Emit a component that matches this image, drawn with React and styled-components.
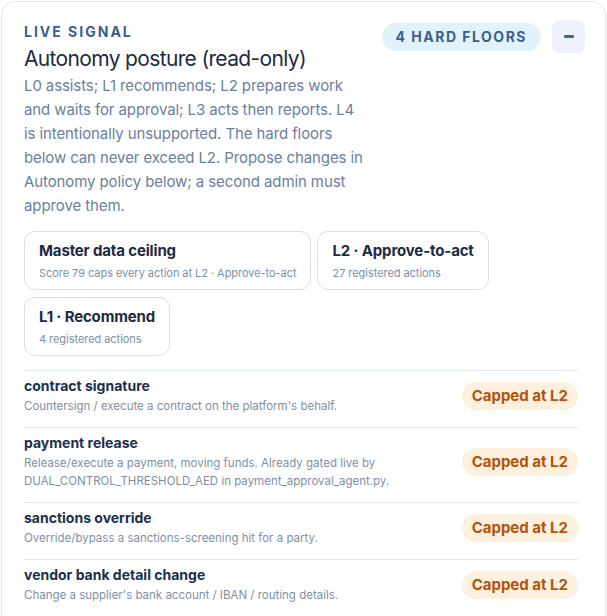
import React from "react";
import styled, { createGlobalStyle } from "styled-components";

const floors = [
  {
    id: "contract_signature",
    name: "contract signature",
    detail: "Countersign / execute a contract on the platform's behalf.",
  },
  {
    id: "payment_release",
    name: "payment release",
    detail:
      "Release/execute a payment, moving funds. Already gated live by DUAL_CONTROL_THRESHOLD_AED in payment_approval_agent.py.",
  },
  {
    id: "sanctions_override",
    name: "sanctions override",
    detail: "Override/bypass a sanctions-screening hit for a party.",
  },
  {
    id: "vendor_bank_detail_change",
    name: "vendor bank detail change",
    detail: "Change a supplier's bank account / IBAN / routing details.",
  },
];

const levels = [
  {
    title: "Master data ceiling",
    note: "Score 79 caps every action at L2 · Approve-to-act",
  },
  { title: "L2 · Approve-to-act", note: "27 registered actions" },
  { title: "L1 · Recommend", note: "4 registered actions" },
];

function App() {
  return (
    <>
      <GlobalStyle />
      <Card>
        <Header>
          <Intro>
            <Eyebrow>LIVE SIGNAL</Eyebrow>
            <Title>Autonomy posture (read-only)</Title>
            <Description>
              L0 assists; L1 recommends; L2 prepares work and waits for
              approval; L3 acts then reports. L4 is intentionally unsupported.
              The hard floors below can never exceed L2. Propose changes in
              Autonomy policy below; a second admin must approve them.
            </Description>
          </Intro>
          <Actions>
            <CountPill>4 HARD FLOORS</CountPill>
            <CollapseButton aria-label="Collapse">
              <MinusBar />
            </CollapseButton>
          </Actions>
        </Header>

        <LevelGrid>
          {levels.map((level) => (
            <LevelChip key={level.title}>
              <LevelTitle>{level.title}</LevelTitle>
              <LevelNote>{level.note}</LevelNote>
            </LevelChip>
          ))}
        </LevelGrid>

        <FloorList>
          {floors.map((floor) => (
            <FloorRow key={floor.id}>
              <FloorText>
                <FloorName>{floor.name}</FloorName>
                <FloorDetail>{floor.detail}</FloorDetail>
              </FloorText>
              <CapBadge>Capped at L2</CapBadge>
            </FloorRow>
          ))}
        </FloorList>
      </Card>
    </>
  );
}

const GlobalStyle = createGlobalStyle`
  body {
    margin: 0;
    background: #fff;
    font-family: Inter, "Noto Sans", sans-serif;
  }
`;

const Card = styled.section`
  box-sizing: border-box;
  width: 605px;
  margin: 1px 0 0 1px;
  padding: 21px 27px 24px 22px;
  border: 1px solid #dfe7f0;
  border-radius: 14px;
  background: #fff;
`;

const Header = styled.header`
  display: flex;
  justify-content: space-between;
  align-items: flex-start;
  gap: 10px;
  margin-right: -7px;
`;

const Intro = styled.div`
  flex: 1;
  min-width: 0;
  display: flex;
  flex-direction: column;
`;

const Eyebrow = styled.div`
  font-size: 14px;
  line-height: 18px;
  font-weight: 700;
  letter-spacing: 2px;
  color: #3b5f8f;
`;

const Title = styled.h2`
  margin: 4px 0 0;
  font-size: 21px;
  line-height: 28px;
  font-weight: 400;
  letter-spacing: -0.65px;
  color: #1d2b46;
`;

const Description = styled.p`
  margin: 1px 0 0;
  max-width: 345px;
  font-size: 15px;
  line-height: 24px;
  letter-spacing: -0.1px;
  color: #6c809c;
`;

const Actions = styled.div`
  display: flex;
  align-items: center;
  gap: 11px;
  flex-shrink: 0;
  margin-top: -3px;
`;

const CountPill = styled.span`
  padding: 5px 14px;
  border-radius: 999px;
  background: #e2f2fb;
  color: #3b5f8e;
  font-size: 14px;
  line-height: 18px;
  font-weight: 700;
  letter-spacing: 1.5px;
`;

const CollapseButton = styled.button`
  display: flex;
  align-items: center;
  justify-content: center;
  width: 33px;
  height: 33px;
  padding: 0;
  border: none;
  border-radius: 8px;
  background: #edf2fa;
  cursor: pointer;
`;

const MinusBar = styled.span`
  width: 10px;
  height: 2.5px;
  border-radius: 1px;
  background: #41679a;
`;

const LevelGrid = styled.div`
  display: flex;
  flex-wrap: wrap;
  gap: 7px 6px;
  margin-top: 13px;
`;

const LevelChip = styled.div`
  padding: 9px 14px 8px;
  border: 1px solid #d5e1ed;
  border-radius: 11px;
`;

const LevelTitle = styled.div`
  font-size: 15px;
  line-height: 20px;
  font-weight: 700;
  letter-spacing: -0.15px;
  color: #1c2a44;
`;

const LevelNote = styled.div`
  margin-top: 4px;
  font-size: 11px;
  line-height: 16px;
  letter-spacing: -0.05px;
  color: #7e8fa6;
`;

const FloorList = styled.div`
  margin-top: 14px;
`;

const FloorRow = styled.div`
  display: flex;
  align-items: center;
  justify-content: space-between;
  gap: 16px;
  padding: 5px 0 12px;
  border-top: 1px solid #dfe8f1;
`;

const FloorText = styled.div`
  display: flex;
  flex-direction: column;
  gap: 1px;
  max-width: 410px;
`;

const FloorName = styled.div`
  font-size: 14px;
  line-height: 20px;
  font-weight: 700;
  color: #20304b;
`;

const FloorDetail = styled.div`
  font-size: 11.5px;
  line-height: 18px;
  color: #7f8fa5;
`;

const CapBadge = styled.span`
  flex-shrink: 0;
  padding: 5px 10px;
  border-radius: 999px;
  background: #fdf0de;
  color: #b4540c;
  font-size: 15px;
  line-height: 18px;
  font-weight: 700;
`;

export default App;
